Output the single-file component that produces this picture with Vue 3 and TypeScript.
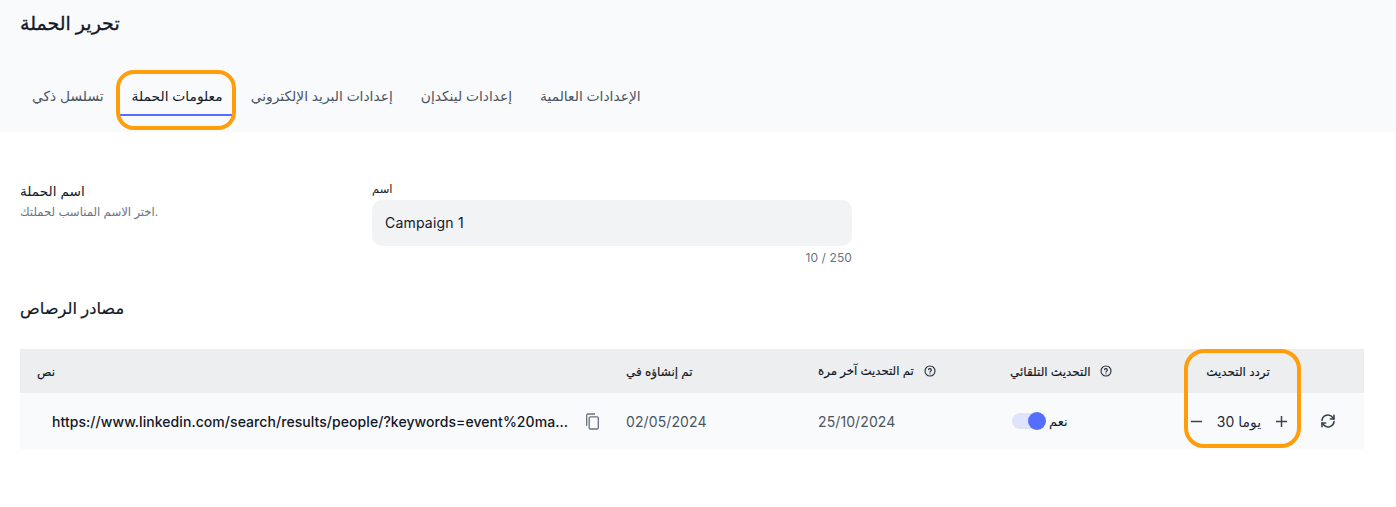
<script setup lang="ts">
// Campaign edit page: tab bar, name field, and the lead sources table.
const tabs = [
  { label: 'تسلسل ذكي', active: false },
  { label: 'معلومات الحملة', active: true },
  { label: 'إعدادات البريد الإلكتروني', active: false },
  { label: 'إعدادات لينكدإن', active: false },
  { label: 'الإعدادات العالمية', active: false },
]
</script>

<template>
  <div class="page">
    <header class="top">
      <h1 class="title">تحرير الحملة</h1>
      <nav class="tabs">
        <div v-for="t in tabs" :key="t.label" class="tab" :class="{ active: t.active }">
          <span>{{ t.label }}</span>
          <i v-if="t.active" class="mark tab-mark"></i>
        </div>
      </nav>
    </header>

    <section class="name-row">
      <div class="name-info">
        <div class="name-head">اسم الحملة</div>
        <div class="name-sub">اختر الاسم المناسب لحملتك.</div>
      </div>
      <div class="field">
        <label class="field-label">اسم</label>
        <div class="input">Campaign 1</div>
        <div class="count">10 / 250</div>
      </div>
    </section>

    <h2 class="sources">مصادر الرصاص</h2>

    <div class="table">
      <div class="row head">
        <div class="cell c-text">نص</div>
        <div class="cell c-date">تم إنشاؤه في</div>
        <div class="cell c-date narrow">
          <span>تم التحديث آخر مرة</span>
          <svg class="help" viewBox="0 0 24 24" fill="none" stroke="currentColor" stroke-width="2.2" stroke-linecap="round">
            <circle cx="12" cy="12" r="10" />
            <path d="M9 9.2a3 3 0 0 1 5.8 1c0 2-2.8 2.4-2.8 4" />
            <path d="M12 17.6v.1" />
          </svg>
        </div>
        <div class="cell c-date">
          <span>التحديث التلقائي</span>
          <svg class="help" viewBox="0 0 24 24" fill="none" stroke="currentColor" stroke-width="2.2" stroke-linecap="round">
            <circle cx="12" cy="12" r="10" />
            <path d="M9 9.2a3 3 0 0 1 5.8 1c0 2-2.8 2.4-2.8 4" />
            <path d="M12 17.6v.1" />
          </svg>
        </div>
        <div class="cell c-freq">تردد التحديث</div>
        <div class="cell c-act"></div>
      </div>
      <div class="row body">
        <div class="cell c-text url-cell">
          <span class="url">https://www.linkedin.com/search/results/people/?keywords=event%20ma...</span>
          <svg class="copy" viewBox="0 0 18 20" fill="none" stroke="currentColor" stroke-width="1.6" stroke-linejoin="round">
            <rect x="5" y="4.5" width="11" height="14.5" rx="1.6" />
            <path d="M2 15V3a2 2 0 0 1 2-2h8" />
          </svg>
        </div>
        <div class="cell c-date date">02/05/2024</div>
        <div class="cell c-date date">25/10/2024</div>
        <div class="cell c-date">
          <span class="switch"><i></i></span>
          <span class="yes">نعم</span>
        </div>
        <div class="cell c-freq stepper">
          <svg class="step" viewBox="0 0 14 14" stroke="currentColor" stroke-width="1.6"><path d="M1 7h12" /></svg>
          <span class="days">30 يوما</span>
          <svg class="step" viewBox="0 0 14 14" stroke="currentColor" stroke-width="1.6"><path d="M1 7h12M7 1v12" /></svg>
        </div>
        <div class="cell c-act">
          <svg class="sync" viewBox="0 0 24 24" fill="none" stroke="currentColor" stroke-width="2.4" stroke-linecap="round" stroke-linejoin="round">
            <path d="M3 11a9 9 0 0 1 16-4.4L21 9" />
            <path d="M21 3.5V9h-5.5" />
            <path d="M21 13a9 9 0 0 1-16 4.4L3 15" />
            <path d="M3 20.5V15h5.5" />
          </svg>
        </div>
      </div>
      <i class="mark freq-mark"></i>
    </div>
  </div>
</template>

<style scoped>
.page {
  min-height: 507px;
  background: #fff;
  color: #111827;
  font-family: Inter, "Noto Sans", "DejaVu Sans", sans-serif;
}
.top {
  height: 132px;
  background: #f9fafb;
  padding: 12px 20px 0;
  box-sizing: border-box;
}
.title {
  margin: 0;
  font-size: 19px;
  line-height: 24px;
  font-weight: 500;
  -webkit-text-stroke: .3px currentColor;
}
.tabs {
  display: flex;
  gap: 6px;
  margin-top: 34px;
  height: 46px;
}
.tab {
  position: relative;
  display: flex;
  align-items: center;
  padding: 6px 10px 0 12px;
  font-size: 13.8px;
  color: #4b5563;
  white-space: nowrap;
}
.tab.active {
  color: #111827;
  box-shadow: inset 0 -2px 0 #546fff;
}
.mark {
  position: absolute;
  border: 4px solid #ff9d0a;
  border-radius: 18px;
  pointer-events: none;
}
.tab-mark {
  left: -4px;
  right: -3px;
  top: 0;
  bottom: -14px;
}
.name-row {
  display: flex;
  padding: 50px 20px 0;
}
.name-info {
  width: 352px;
}
.name-head {
  font-size: 13.7px;
  line-height: 20px;
  margin-top: -1px;
}
.name-sub {
  font-size: 11.7px;
  line-height: 16px;
  margin-top: 3px;
  color: #6b7280;
}
.field {
  width: 480px;
}
.field-label {
  display: block;
  font-size: 11.5px;
  line-height: 14px;
  margin-bottom: 4px;
}
.input {
  height: 46px;
  line-height: 46px;
  padding: 0 13px;
  background: #f2f3f5;
  border-radius: 10px;
  font-size: 14px;
  letter-spacing: .2px;
}
.count {
  text-align: right;
  font-size: 12px;
  line-height: 16px;
  margin-top: 4px;
  color: #6b7280;
  letter-spacing: .1px;
}
.sources {
  margin: 30px 20px 0;
  font-size: 16.3px;
  line-height: 24px;
  font-weight: 500;
  -webkit-text-stroke: .2px currentColor;
}
.table {
  position: relative;
  margin: 29px 32px 0 20px;
}
.row {
  display: grid;
  grid-template-columns: 590px 192px 192px 192px 116px 62px;
}
.head {
  height: 44px;
  background: #edeef0;
  font-size: 12px;
  font-weight: 500;
}
.head .cell > span,
.head .c-text,
.head .c-freq,
.head .c-date {
  -webkit-text-stroke: .15px currentColor;
}
.body {
  height: 56px;
  background: #f9fafb;
  font-size: 14px;
}
.cell {
  display: flex;
  align-items: center;
  min-width: 0;
}
.c-text {
  padding-left: 17px;
}
.c-date {
  padding-left: 16px;
  gap: 8px;
}
.url-cell {
  padding-left: 32px;
  justify-content: space-between;
  padding-right: 10px;
}
.url {
  font-weight: 500;
  white-space: nowrap;
  letter-spacing: .06px;
}
.copy {
  width: 15px;
  height: 17px;
  color: #6b7280;
}
.date {
  color: #4b5563;
  letter-spacing: .1px;
}
.help {
  width: 12px;
  height: 12px;
  color: #1f2937;
  margin-left: 1px;
}
.narrow {
  gap: 9px;
}
.narrow span {
  font-size: 11.8px;
}
.switch {
  position: relative;
  display: inline-block;
  width: 32px;
  height: 16px;
  border-radius: 8px;
  background: #dfe3fb;
  margin-left: 2px;
}
.switch i {
  position: absolute;
  right: -2px;
  top: -1px;
  width: 18px;
  height: 18px;
  border-radius: 50%;
  background: #546fff;
}
.yes {
  font-size: 13px;
  margin-left: -3px;
}
.c-freq {
  justify-content: center;
  padding-right: 12px;
}
.stepper {
  justify-content: space-between;
  padding: 0 14px 0 4px;
  color: #374151;
}
.step {
  width: 13px;
  height: 13px;
}
.days {
  font-size: 14px;
  color: #1f2937;
}
.c-act {
  padding-left: 18px;
}
.sync {
  width: 16px;
  height: 16px;
  color: #374151;
}
.freq-mark {
  left: 1164px;
  top: 0;
  width: 109px;
  height: 91px;
  border-radius: 20px;
}
</style>

<style>
body {
  margin: 0;
  background: #fff;
}
</style>
